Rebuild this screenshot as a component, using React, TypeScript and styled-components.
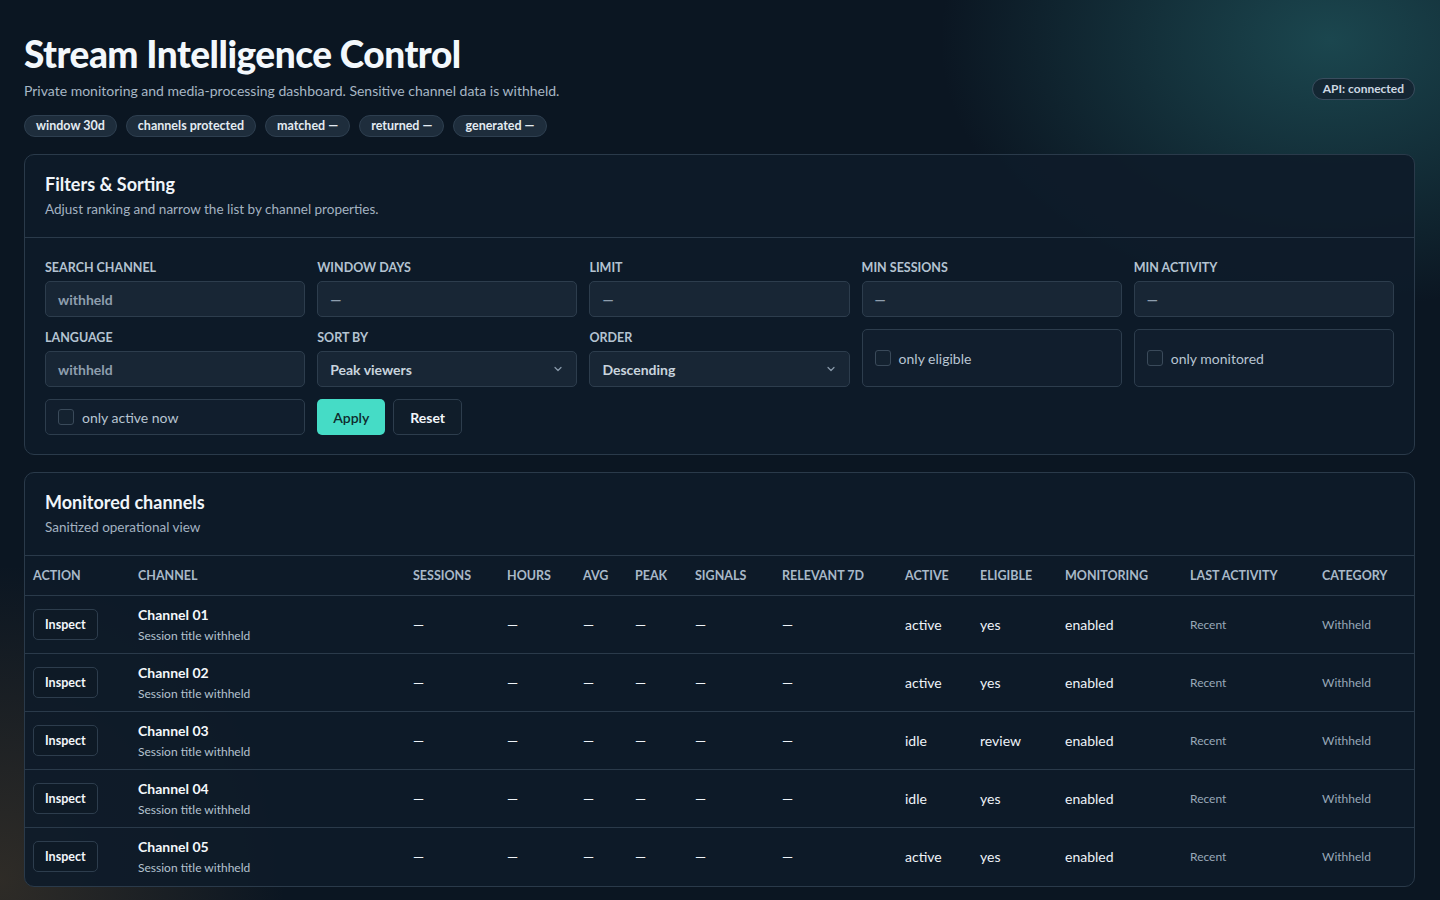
import React, { FC } from 'react';
import styled, { createGlobalStyle } from 'styled-components';

const GlobalStyle = createGlobalStyle`
  html, body { margin: 0; padding: 0; }
  body {
    font-family: Lato, "Open Sans", sans-serif;
    color: #e6eef5;
    min-height: 900px;
    background:
      radial-gradient(ellipse 520px 360px at 1330px 40px, rgba(40, 110, 115, 0.55), transparent 75%),
      radial-gradient(ellipse 380px 420px at 0px 880px, rgba(90, 70, 45, 0.45), transparent 75%),
      #0b1622;
  }
  * { box-sizing: border-box; }
`;

type Row = { name: string; active: string; eligible: string };

const rows: Row[] = [
  { name: 'Channel 01', active: 'active', eligible: 'yes' },
  { name: 'Channel 02', active: 'active', eligible: 'yes' },
  { name: 'Channel 03', active: 'idle', eligible: 'review' },
  { name: 'Channel 04', active: 'idle', eligible: 'yes' },
  { name: 'Channel 05', active: 'active', eligible: 'yes' },
];

const columns: { label: string; width: number }[] = [
  { label: 'ACTION', width: 105 },
  { label: 'CHANNEL', width: 275 },
  { label: 'SESSIONS', width: 94 },
  { label: 'HOURS', width: 76 },
  { label: 'AVG', width: 52 },
  { label: 'PEAK', width: 60 },
  { label: 'SIGNALS', width: 87 },
  { label: 'RELEVANT 7D', width: 123 },
  { label: 'ACTIVE', width: 75 },
  { label: 'ELIGIBLE', width: 85 },
  { label: 'MONITORING', width: 125 },
  { label: 'LAST ACTIVITY', width: 132 },
  { label: 'CATEGORY', width: 0 },
];

const Chevron: FC = () => (
  <svg width="12" height="12" viewBox="0 0 12 12" fill="none">
    <path d="M3 4.5 L6 7.5 L9 4.5" stroke="#8a9aab" strokeWidth="1.2" strokeLinecap="round" strokeLinejoin="round" />
  </svg>
);

const App: FC = () => (
  <>
    <GlobalStyle />
    <Page>
      <Header>
        <div>
          <Title>Stream Intelligence Control</Title>
          <Subtitle>Private monitoring and media-processing dashboard. Sensitive channel data is withheld.</Subtitle>
          <Pills>
            <Pill>window 30d</Pill>
            <Pill>channels protected</Pill>
            <Pill>matched —</Pill>
            <Pill>returned —</Pill>
            <Pill>generated —</Pill>
          </Pills>
        </div>
        <Status>API: connected</Status>
      </Header>

      <Card>
        <CardHead>
          <CardTitle>Filters &amp; Sorting</CardTitle>
          <CardSub>Adjust ranking and narrow the list by channel properties.</CardSub>
        </CardHead>
        <FilterGrid>
          <Field>
            <Label>SEARCH CHANNEL</Label>
            <Input>withheld</Input>
          </Field>
          <Field>
            <Label>WINDOW DAYS</Label>
            <Input>—</Input>
          </Field>
          <Field>
            <Label>LIMIT</Label>
            <Input>—</Input>
          </Field>
          <Field>
            <Label>MIN SESSIONS</Label>
            <Input>—</Input>
          </Field>
          <Field>
            <Label>MIN ACTIVITY</Label>
            <Input>—</Input>
          </Field>
          <Field>
            <Label>LANGUAGE</Label>
            <Input>withheld</Input>
          </Field>
          <Field>
            <Label>SORT BY</Label>
            <Select>Peak viewers<Chevron /></Select>
          </Field>
          <Field>
            <Label>ORDER</Label>
            <Select>Descending<Chevron /></Select>
          </Field>
          <CheckBox $tall><Box />only eligible</CheckBox>
          <CheckBox $tall><Box />only monitored</CheckBox>
          <CheckBox><Box />only active now</CheckBox>
          <Buttons>
            <ApplyButton>Apply</ApplyButton>
            <GhostButton>Reset</GhostButton>
          </Buttons>
        </FilterGrid>
      </Card>

      <Card>
        <CardHead>
          <CardTitle>Monitored channels</CardTitle>
          <CardSub>Sanitized operational view</CardSub>
        </CardHead>
        <Table>
          <colgroup>
            {columns.map((c) => (
              <col key={c.label} style={c.width ? { width: c.width } : undefined} />
            ))}
          </colgroup>
          <thead>
            <tr>
              {columns.map((c) => (
                <Th key={c.label}>{c.label}</Th>
              ))}
            </tr>
          </thead>
          <tbody>
            {rows.map((r) => (
              <tr key={r.name}>
                <Td><InspectButton>Inspect</InspectButton></Td>
                <Td>
                  <ChannelName>{r.name}</ChannelName>
                  <ChannelSub>Session title withheld</ChannelSub>
                </Td>
                <Td>—</Td>
                <Td>—</Td>
                <Td>—</Td>
                <Td>—</Td>
                <Td>—</Td>
                <Td>—</Td>
                <Td>{r.active}</Td>
                <Td>{r.eligible}</Td>
                <Td>enabled</Td>
                <MutedTd>Recent</MutedTd>
                <MutedTd>Withheld</MutedTd>
              </tr>
            ))}
          </tbody>
        </Table>
      </Card>
    </Page>
  </>
);

export default App;

const Page = styled.div`
  padding: 30px 25px 12px 24px;
  display: flex;
  flex-direction: column;
  gap: 17px;
`;
const Header = styled.div`
  display: flex;
  justify-content: space-between;
  align-items: center;
`;
const Title = styled.h1`
  margin: 0;
  font-size: 37px;
  font-weight: 900;
  letter-spacing: -0.5px;
  color: #f3f8fc;
  line-height: 48px;
`;
const Subtitle = styled.p`
  margin: 4px 0 16px;
  font-size: 14px;
  color: #a7b6c5;
`;
const Pills = styled.div`
  display: flex;
  gap: 9px;
`;
const Pill = styled.span`
  font-size: 12.5px;
  font-weight: 700;
  color: #e3ebf2;
  background: #1e2d3c;
  border: 1px solid #2e3f50;
  border-radius: 999px;
  padding: 2px 11px 3px;
`;
const Status = styled.span`
  font-size: 12px;
  font-weight: 700;
  color: #cdd8e2;
  background: rgba(20, 35, 48, 0.85);
  border: 1px solid #3a4d5e;
  border-radius: 999px;
  padding: 2px 10px 3px;
  margin-top: 10px;
`;
const Card = styled.section`
  background: rgba(14, 27, 41, 0.92);
  border: 1px solid #2a3a4a;
  border-radius: 10px;
  overflow: hidden;
`;
const CardHead = styled.div`
  padding: 18px 20px 20px;
  border-bottom: 1px solid #2a3a4a;
`;
const CardTitle = styled.h2`
  margin: 0;
  font-size: 18px;
  font-weight: 700;
  color: #f0f5fa;
`;
const CardSub = styled.div`
  margin-top: 6px;
  font-size: 13.5px;
  color: #a3b2c1;
`;
const FilterGrid = styled.div`
  display: grid;
  grid-template-columns: repeat(5, 1fr);
  gap: 12px;
  padding: 22px 20px 19px;
  align-items: end;
`;
const Field = styled.div`
  display: flex;
  flex-direction: column;
  gap: 6px;
`;
const Label = styled.span`
  font-size: 12.5px;
  font-weight: 700;
  color: #b4c3d1;
`;
const Input = styled.div`
  height: 36px;
  display: flex;
  align-items: center;
  padding: 0 12px;
  background: #182635;
  border: 1px solid #2d3d4d;
  border-radius: 5px;
  font-size: 14px;
  font-weight: 700;
  color: #8e9eae;
`;
const Select = styled(Input)`
  justify-content: space-between;
  color: #c9d4de;
`;
const CheckBox = styled.div<{ $tall?: boolean }>`
  height: ${(p) => (p.$tall ? 58 : 36)}px;
  display: flex;
  align-items: center;
  gap: 8px;
  padding: 0 12px;
  border: 1px solid #2d3d4d;
  border-radius: 5px;
  background: rgba(20, 34, 48, 0.6);
  font-size: 14px;
  color: #b8c5d2;
`;
const Box = styled.span`
  width: 16px;
  height: 16px;
  border: 1px solid #3a4a5a;
  border-radius: 3px;
  background: #142230;
`;
const Buttons = styled.div`
  display: flex;
  gap: 8px;
`;
const ApplyButton = styled.button`
  height: 36px;
  padding: 0 16px;
  border: none;
  border-radius: 5px;
  background: #45dcc6;
  color: #0f2a2d;
  font-family: inherit;
  font-size: 14px;
  font-weight: 600;
`;
const GhostButton = styled.button`
  height: 36px;
  padding: 0 16px;
  border: 1px solid #2d3d4d;
  border-radius: 5px;
  background: #101d2a;
  color: #f2f6fa;
  font-family: inherit;
  font-size: 14px;
  font-weight: 700;
`;
const Table = styled.table`
  width: 100%;
  border-collapse: collapse;
  table-layout: fixed;
`;
const Th = styled.th`
  text-align: left;
  font-size: 12.5px;
  font-weight: 700;
  color: #a9b9c8;
  padding: 12px 8px;
  border-bottom: 1px solid #2a3a4a;
`;
const Td = styled.td`
  font-size: 14px;
  color: #eef3f8;
  padding: 0 8px;
  height: 58px;
  border-bottom: 1px solid #2a3a4a;
  tr:last-child & { border-bottom: none; }
`;
const MutedTd = styled(Td)`
  font-size: 12px;
  color: #98a8b8;
`;
const InspectButton = styled.button`
  padding: 7px 11px;
  border: 1px solid #2d3d4d;
  border-radius: 5px;
  background: #0e1a26;
  color: #f2f6fa;
  font-family: inherit;
  font-size: 12.5px;
  font-weight: 700;
`;
const ChannelName = styled.div`
  font-size: 14px;
  font-weight: 700;
  color: #f4f8fb;
`;
const ChannelSub = styled.div`
  margin-top: 5px;
  font-size: 12px;
  color: #b4c2cf;
`;
